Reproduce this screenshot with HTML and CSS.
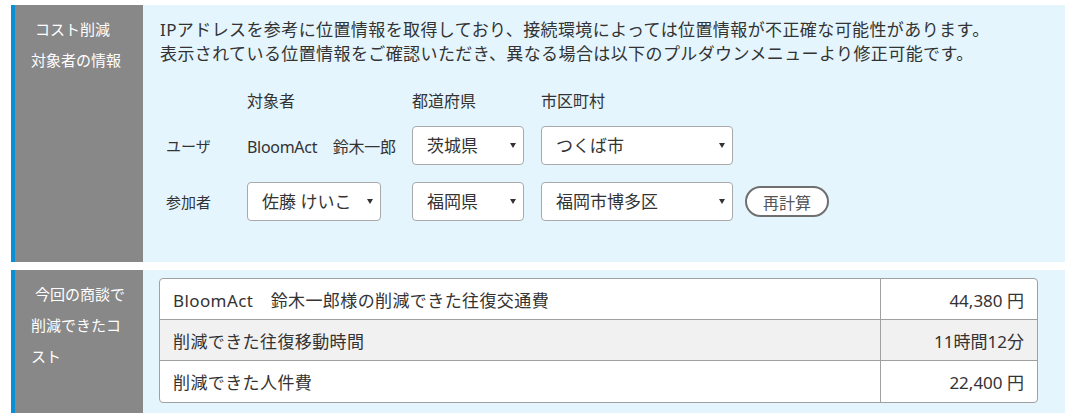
FILE: index.html
```html
<!DOCTYPE html>
<html lang="ja">
<head>
<meta charset="utf-8">
<title>コスト削減</title>
<link rel="stylesheet" href="styles.css">
</head>
<body>
<div class="page">
  <section class="section">
    <div class="side">&nbsp;コスト削減<br>対象者の情報</div>
    <div class="main main-info">
      <p class="desc">IPアドレスを参考に位置情報を取得しており、接続環境によっては位置情報が不正確な可能性があります。<br>表示されている位置情報をご確認いただき、異なる場合は以下のプルダウンメニューより修正可能です。</p>
      <div class="form-grid">
        <div class="cell"></div>
        <div class="cell head">対象者</div>
        <div class="cell head">都道府県</div>
        <div class="cell head">市区町村</div>
        <div class="cell"></div>

        <div class="cell label">ユーザ</div>
        <div class="cell name">BloomAct　鈴木一郎</div>
        <div class="cell"><div class="sel sel-pref"><select><option>茨城県</option></select></div></div>
        <div class="cell"><div class="sel sel-city"><select><option>つくば市</option></select></div></div>
        <div class="cell"></div>

        <div class="cell label">参加者</div>
        <div class="cell"><div class="sel sel-person"><select><option>佐藤 けいこ</option></select></div></div>
        <div class="cell"><div class="sel sel-pref"><select><option>福岡県</option></select></div></div>
        <div class="cell"><div class="sel sel-city"><select><option>福岡市博多区</option></select></div></div>
        <div class="cell"><button class="btn" type="button">再計算</button></div>
      </div>
    </div>
  </section>
  <section class="section">
    <div class="side">&nbsp;今回の商談で削減できたコスト</div>
    <div class="main main-cost">
      <table class="cost">
        <tr><td class="c-label">BloomAct　鈴木一郎様の削減できた往復交通費</td><td class="c-val">44,380 円</td></tr>
        <tr class="alt"><td class="c-label">削減できた往復移動時間</td><td class="c-val">11時間12分</td></tr>
        <tr><td class="c-label">削減できた人件費</td><td class="c-val">22,400 円</td></tr>
      </table>
    </div>
  </section>
</div>
</body>
</html>
```
FILE: styles.css
```css
html, body {
  margin: 0;
  padding: 0;
  background: #fff;
}
body {
  font-family: "Noto Sans", "Noto Sans CJK JP", sans-serif;
  color: #333;
}
.page {
  padding: 5px 0 0 11px;
}
.section {
  display: flex;
  border-left: 4px solid #0a8fd6;
  margin-bottom: 8px;
}
.section:last-child {
  margin-bottom: 0;
}
.side {
  width: 96px;
  flex: none;
  background: #888888;
  color: #fff;
  font-size: 15px;
  line-height: 31px;
  padding: 9px 16px;
  word-break: break-all;
}
.main {
  flex: 1;
  background: #e4f5fd;
}
.main-info {
  padding: 13px 27px 41px 17px;
}
.desc {
  margin: 0;
  font-size: 17px;
  letter-spacing: 0.4px;
  line-height: 24px;
}
.form-grid {
  display: grid;
  grid-template-columns: 87px 165px 129px 204px auto;
  grid-template-rows: 24px 39px 39px;
  row-gap: 17px;
  align-items: center;
  margin-top: 19px;
}
.head {
  font-size: 16px;
  margin-bottom: -6px;
}
.label {
  font-size: 15px;
  padding-left: 6px;
}
.name {
  font-size: 16px;
  letter-spacing: -0.3px;
}
.sel {
  position: relative;
  height: 39px;
}
.sel select {
  appearance: none;
  -webkit-appearance: none;
  width: 100%;
  height: 100%;
  box-sizing: border-box;
  border: 1px solid #a9a9a9;
  border-radius: 4px;
  background: #fff;
  font-family: "Noto Sans", "Noto Sans CJK JP", sans-serif;
  font-size: 17px;
  color: #333;
  padding: 0 20px 0 14px;
  margin: 0;
}
.sel::after {
  content: "";
  position: absolute;
  right: 8px;
  top: 17px;
  border-left: 3px solid transparent;
  border-right: 3px solid transparent;
  border-top: 5px solid #333;
  pointer-events: none;
}
.sel-pref { width: 112px; }
.sel-city { width: 192px; }
.sel-person { width: 134px; }
.btn {
  width: 84px;
  height: 31px;
  border: 2px solid #6f6f6f;
  border-radius: 16px;
  background: #fff;
  color: #555;
  font-family: "Noto Sans", "Noto Sans CJK JP", sans-serif;
  font-size: 16px;
  padding: 0;
}
.main-cost {
  padding: 8px 27px 10px 16px;
}
.cost {
  width: 100%;
  border-collapse: separate;
  border-spacing: 0;
  border: 1px solid #a0a0a0;
  border-radius: 4px;
  background: #fff;
  font-size: 17px;
  letter-spacing: 0.4px;
}
.cost td {
  height: 41px;
  box-sizing: border-box;
  padding: 0 13px;
  border-bottom: 1px solid #a0a0a0;
}
.cost tr:last-child td {
  border-bottom: none;
  height: 41px;
}
.cost tr:first-child td:first-child { border-top-left-radius: 4px; }
.cost tr:last-child td:first-child { border-bottom-left-radius: 4px; }
.cost .c-val {
  width: 157px;
  box-sizing: border-box;
  text-align: right;
  border-left: 1px solid #a0a0a0;
  letter-spacing: 0;
}
.cost tr.alt td {
  background: #f1f1f1;
}
```
